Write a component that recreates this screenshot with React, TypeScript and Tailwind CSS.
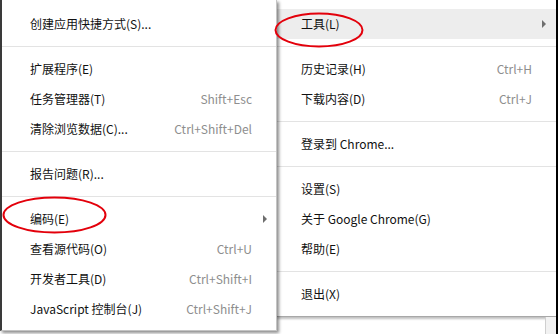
import React from 'react';

type Item =
  | { type: 'sep' }
  | { type: 'item'; label: string; shortcut?: string; sub?: boolean; active?: boolean };

const leftItems: Item[] = [
  { type: 'item', label: '创建应用快捷方式(S)...' },
  { type: 'sep' },
  { type: 'item', label: '扩展程序(E)' },
  { type: 'item', label: '任务管理器(T)', shortcut: 'Shift+Esc' },
  { type: 'item', label: '清除浏览数据(C)...', shortcut: 'Ctrl+Shift+Del' },
  { type: 'sep' },
  { type: 'item', label: '报告问题(R)...' },
  { type: 'sep' },
  { type: 'item', label: '编码(E)', sub: true },
  { type: 'item', label: '查看源代码(O)', shortcut: 'Ctrl+U' },
  { type: 'item', label: '开发者工具(D)', shortcut: 'Ctrl+Shift+I' },
  { type: 'item', label: 'JavaScript 控制台(J)', shortcut: 'Ctrl+Shift+J' },
];

const rightItems: Item[] = [
  { type: 'item', label: '工具(L)', sub: true, active: true },
  { type: 'sep' },
  { type: 'item', label: '历史记录(H)', shortcut: 'Ctrl+H' },
  { type: 'item', label: '下载内容(D)', shortcut: 'Ctrl+J' },
  { type: 'sep' },
  { type: 'item', label: '登录到 Chrome...' },
  { type: 'sep' },
  { type: 'item', label: '设置(S)' },
  { type: 'item', label: '关于 Google Chrome(G)' },
  { type: 'item', label: '帮助(E)' },
  { type: 'sep' },
  { type: 'item', label: '退出(X)' },
];

const Arrow = () => (
  <span className="w-0 h-0 border-y-[4px] border-y-transparent border-l-[4px] border-l-[#6e6e6e]" />
);

const MenuList = ({ items, pl, pr, prSub }: { items: Item[]; pl: string; pr: string; prSub: string }) => (
  <>
    {items.map((it, i) =>
      it.type === 'sep' ? (
        <div key={i} className="h-[15px] flex items-center">
          <div className="w-full h-px bg-[#e3e3e3]" />
        </div>
      ) : (
        <div
          key={i}
          className={`h-[30px] flex items-center justify-between ${pl} ${it.sub ? prSub : pr} ${
            it.active ? 'bg-[#ededed]' : ''
          }`}
        >
          <span className="text-[#111]">{it.label}</span>
          {it.shortcut && <span className="text-[#8e8e8e]">{it.shortcut}</span>}
          {it.sub && <Arrow />}
        </div>
      )
    )}
  </>
);

export default function App() {
  return (
    <div
      className="relative w-[558px] h-[334px] overflow-hidden bg-white flex text-[12px] leading-none"
      style={{ fontFamily: '"Noto Sans CJK SC", "Noto Sans", sans-serif' }}
    >
      {/* left submenu */}
      <div className="relative z-10 w-[277px] h-[331px] shrink-0 bg-white border-l-2 border-l-[#3a3a3a] border-r border-b border-r-[#c4c4c4] border-b-[#c4c4c4] pt-[9px] shadow-[2px_2px_3px_rgba(0,0,0,0.45)]">
        <MenuList items={leftItems} pl="pl-[28px]" pr="pr-[24px]" prSub="pr-[9px]" />
      </div>

      {/* main menu */}
      <div className="w-[279px] shrink-0 flex flex-col">
        <div className="h-[317px] bg-white border-b border-[#a8a8a8] pt-[9px] shadow-[0_2px_2px_rgba(0,0,0,0.25)]">
          <MenuList items={rightItems} pl="pl-[24px]" pr="pr-[24px]" prSub="pr-[10px]" />
        </div>
        <div className="flex-1 flex justify-end">
          <div className="w-[11px] border-l border-[#cfcfcf] bg-[#f2f2f2]" />
        </div>
      </div>

      <div className="w-[2px] bg-black" />

      {/* annotations */}
      <svg className="absolute inset-0 pointer-events-none z-20" width="558" height="334">
        <ellipse cx="319" cy="30" rx="43.5" ry="16.5" fill="none" stroke="#e3000b" strokeWidth="2" />
        <ellipse cx="54.5" cy="215" rx="51" ry="17.5" fill="none" stroke="#e3000b" strokeWidth="2" />
      </svg>
    </div>
  );
}
